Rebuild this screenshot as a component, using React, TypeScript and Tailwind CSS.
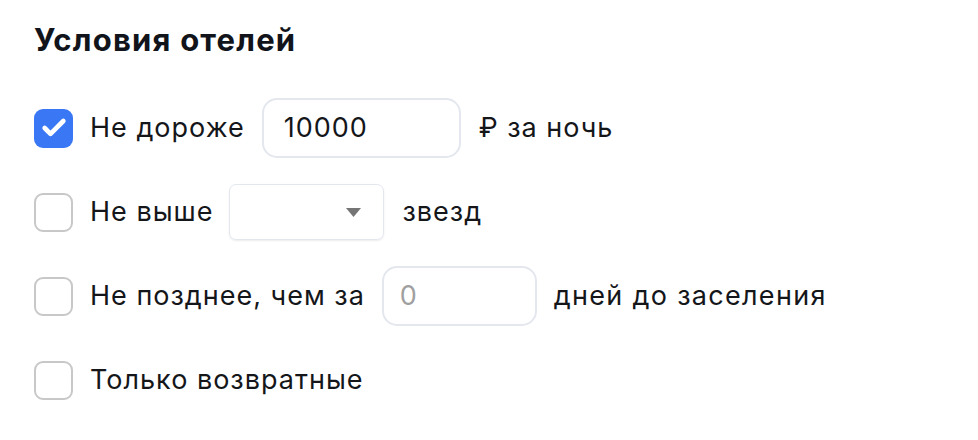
import { Check } from "lucide-react";

const font = { fontFamily: "Inter, 'Noto Sans', sans-serif" };

const Box = ({ checked }: { checked?: boolean }) =>
  checked ? (
    <span className="flex h-[39px] w-[39px] shrink-0 items-center justify-center rounded-[9px] bg-[#3a77f5]">
      <Check className="h-[28px] w-[28px] text-white" strokeWidth={4} />
    </span>
  ) : (
    <span className="h-[39px] w-[39px] shrink-0 rounded-[9px] border-2 border-[#c8c8c8] bg-white" />
  );

export default function App() {
  return (
    <div className="min-h-screen bg-white px-[34px] pt-[21px] text-[#14161a]" style={font}>
      <h1 className="text-[31px] font-bold leading-[38px] tracking-[1.2px] text-[#11141a]">
        Условия отелей
      </h1>

      <div className="mt-[40px] flex flex-col gap-[26px] text-[27px] tracking-[1px]">
        <div className="flex h-[58px] items-center">
          <Box checked />
          <span className="ml-[17px]">Не дороже</span>
          <div className="ml-[17px] flex h-[60px] w-[199px] items-center rounded-[15px] border-2 border-[#e4e7ee] px-[20px]">
            10000
          </div>
          <span className="ml-[18px]">₽ за ночь</span>
        </div>

        <div className="flex h-[58px] items-center">
          <Box />
          <span className="ml-[17px]">Не выше</span>
          <div className="ml-[16px] flex h-[56px] w-[155px] items-center justify-end rounded-[7px] border border-[#e4e7ee] pr-[22px] shadow-[0_1px_2px_rgba(0,0,0,0.08)]">
            <svg width="15" height="9" viewBox="0 0 15 9">
              <path d="M0 0h15L7.5 9z" fill="#757575" />
            </svg>
          </div>
          <span className="ml-[18px]">звезд</span>
        </div>

        <div className="flex h-[58px] items-center">
          <Box />
          <span className="ml-[17px]">Не позднее, чем за</span>
          <div className="ml-[17px] flex h-[60px] w-[155px] items-center rounded-[15px] border-2 border-[#e4e7ee] px-[16px] text-[#a0a0a0]">
            0
          </div>
          <span className="ml-[17px] tracking-[1.3px]">дней до заселения</span>
        </div>

        <div className="flex h-[58px] items-center">
          <Box />
          <span className="ml-[17px]">Только возвратные</span>
        </div>
      </div>
    </div>
  );
}
